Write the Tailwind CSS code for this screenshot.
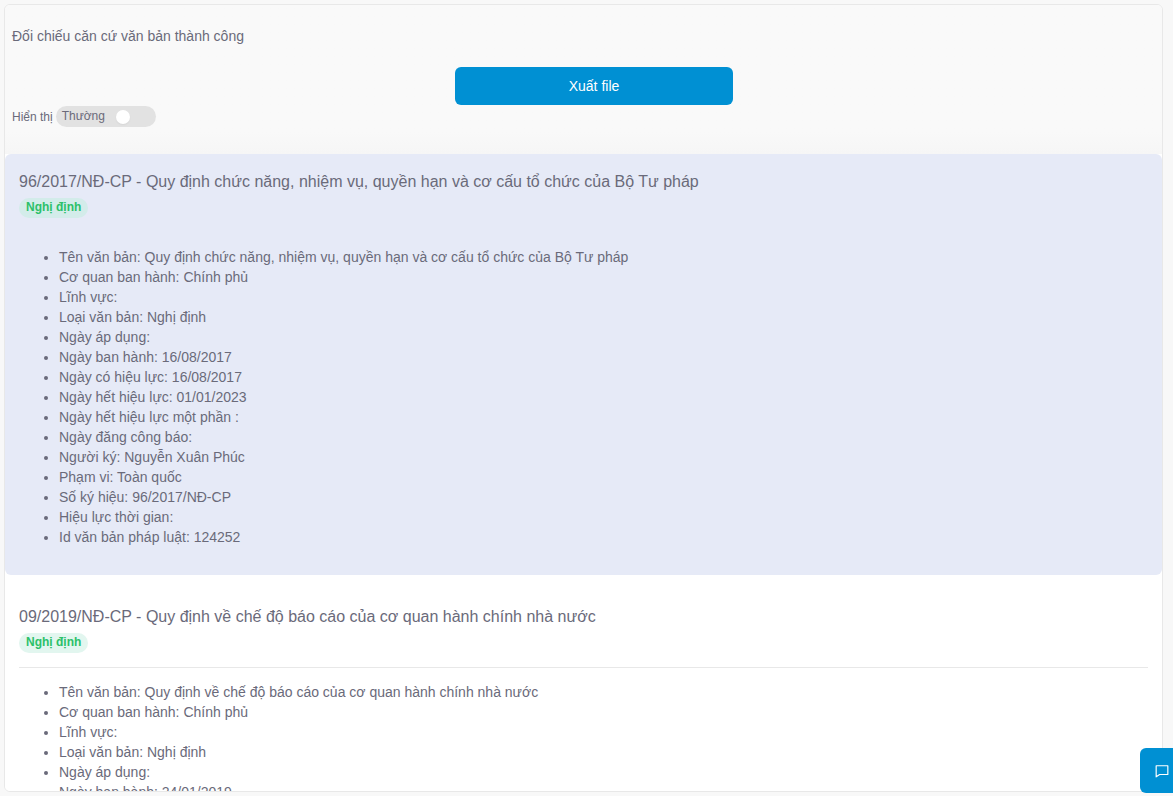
<!DOCTYPE html>
<html lang="en">
<head>
    <meta charset="UTF-8">
    <meta name="viewport" content="width=device-width, initial-scale=1.0">
    <title>Đối chiếu căn cứ văn bản</title>
    <script src="https://cdn.jsdelivr.net/npm/@tailwindcss/browser@4"></script>
</head>
<body class="h-screen overflow-hidden bg-[#f8f8f8] pt-1 pl-1 pr-[10px] font-['Liberation_Sans',Arial,sans-serif] text-sm text-[#6a6a7a]">
    <div class="h-[788px] overflow-hidden rounded-md border border-[#e8e8e8] bg-white">
        <div class="h-[149px] bg-gradient-to-b from-[#f9f9f9] from-85% to-[#f6f6f6] pt-[21px] pl-[7px]">
            <p class="h-5 leading-5">Đối chiếu căn cứ văn bản thành công</p>
            <div class="mt-[21px] ml-[443px] flex h-[38px] w-[278px] items-center justify-center rounded-md bg-[#0090d3] text-white">Xuất file</div>
            <div class="mt-[1px] flex h-[21px] items-center text-xs">
                <span>Hiển thị</span>
                <div class="relative ml-[3px] h-[21px] w-[100px] rounded-full bg-[#e2e2e2] pl-[6px] leading-[20px]">
                    Thường
                    <span class="absolute top-[4px] left-[60px] size-[14px] rounded-full bg-white shadow-xs"></span>
                </div>
            </div>
        </div>

        <div class="h-[421px] rounded-md bg-[#e6eaf7] px-[14px] pt-[17px]">
            <h3 class="text-base leading-[22px]">96/2017/NĐ-CP - Quy định chức năng, nhiệm vụ, quyền hạn và cơ cấu tổ chức của Bộ Tư pháp</h3>
            <span class="mt-[5px] inline-block h-5 rounded-full bg-[#d3ecea] px-[7px] text-xs leading-[18px] font-bold text-[#2cc069]">Nghị định</span>
            <ul class="mt-[29px] list-disc pl-10 leading-5">
                <li>Tên văn bản: Quy định chức năng, nhiệm vụ, quyền hạn và cơ cấu tổ chức của Bộ Tư pháp</li>
                <li>Cơ quan ban hành: Chính phủ</li>
                <li>Lĩnh vực:</li>
                <li>Loại văn bản: Nghị định</li>
                <li>Ngày áp dụng:</li>
                <li>Ngày ban hành: 16/08/2017</li>
                <li>Ngày có hiệu lực: 16/08/2017</li>
                <li>Ngày hết hiệu lực: 01/01/2023</li>
                <li>Ngày hết hiệu lực một phần :</li>
                <li>Ngày đăng công báo:</li>
                <li>Người ký: Nguyễn Xuân Phúc</li>
                <li>Phạm vi: Toàn quốc</li>
                <li>Số ký hiệu: 96/2017/NĐ-CP</li>
                <li>Hiệu lực thời gian:</li>
                <li>Id văn bản pháp luật: 124252</li>
            </ul>
        </div>

        <div class="bg-white px-[14px] pt-[31px]">
            <h3 class="text-base leading-[22px]">09/2019/NĐ-CP - Quy định về chế độ báo cáo của cơ quan hành chính nhà nước</h3>
            <span class="mt-[5px] inline-block h-5 rounded-full bg-[#e2f6ef] px-[7px] text-xs leading-[18px] font-bold text-[#2cc069]">Nghị định</span>
            <div class="mt-[14px] border-t border-[#e8e8e8]"></div>
            <ul class="mt-[14px] list-disc pl-10 leading-5">
                <li>Tên văn bản: Quy định về chế độ báo cáo của cơ quan hành chính nhà nước</li>
                <li>Cơ quan ban hành: Chính phủ</li>
                <li>Lĩnh vực:</li>
                <li>Loại văn bản: Nghị định</li>
                <li>Ngày áp dụng:</li>
                <li>Ngày ban hành: 24/01/2019</li>
            </ul>
        </div>
    </div>

    <div class="fixed top-[748px] left-[1140px] flex h-[45px] w-[33px] items-center justify-center rounded-l-md bg-[#0090d3] pl-[11px]">
        <svg class="size-[14px] shrink-0" viewBox="0 0 24 24" fill="none" stroke="white" stroke-width="2" stroke-linejoin="round"><path d="M2 3h20v15H8l-6 4z"/></svg>
    </div>
</body>
</html>
